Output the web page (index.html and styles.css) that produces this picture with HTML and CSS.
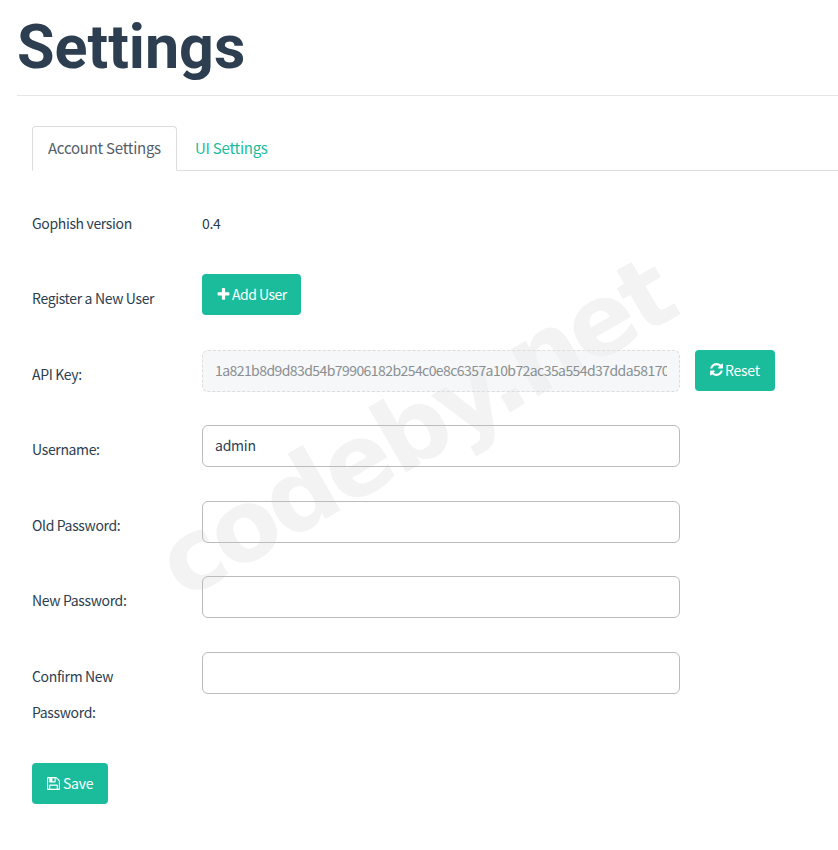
FILE: index.html
```html
<!DOCTYPE html>
<html lang="en">
<head>
    <meta charset="UTF-8">
    <title>Settings - Gophish</title>
    <link rel="stylesheet" href="styles.css">
</head>
<body>
    <div class="main">
        <h1 class="page-header">Settings</h1>
        <div class="tab-wrap">
            <ul class="nav-tabs">
                <li class="tab active">Account Settings</li>
                <li class="tab">UI Settings</li>
            </ul>
            <form class="settings-form">
                <div class="row row-version">
                    <div class="label">Gophish version</div>
                    <div class="value">0.4</div>
                </div>
                <div class="row">
                    <div class="label">Register a New User</div>
                    <button type="button" class="btn btn-add">
                        <svg class="icon" viewBox="0 0 1792 1792"><path d="M1600 736v192q0 40-28 68t-68 28h-416v416q0 40-28 68t-68 28h-192q-40 0-68-28t-28-68v-416h-416q-40 0-68-28t-28-68v-192q0-40 28-68t68-28h416v-416q0-40 28-68t68-28h192q40 0 68 28t28 68v416h416q40 0 68 28t28 68z"/></svg>
                        Add User
                    </button>
                </div>
                <div class="row">
                    <div class="label">API Key:</div>
                    <input class="input" type="text" value="1a821b8d9d83d54b79906182b254c0e8c6357a10b72ac35a554d37dda581706a" disabled>
                    <button type="button" class="btn btn-reset">
                        <svg class="icon" viewBox="0 0 1792 1792"><path d="M1639 1056q0 5-1 7-64 268-268 434.500t-478 166.500q-146 0-282.500-55t-243.500-157l-129 129q-19 19-45 19t-45-19-19-45v-448q0-26 19-45t45-19h448q26 0 45 19t19 45-19 45l-137 137q71 66 161 102t187 36q134 0 250-65t186-179q11-17 53-117 8-23 30-23h192q13 0 22.500 9.500t9.500 22.500zm25-800v448q0 26-19 45t-45 19h-448q-26 0-45-19t-19-45 19-45l138-138q-148-137-349-137-134 0-250 65t-186 179q-11 17-53 117-8 23-30 23h-199q-13 0-22.500-9.500t-9.500-22.500v-7q65-268 270-434.500t480-166.500q146 0 284 55.500t245 156.500l130-129q19-19 45-19t45 19 19 45z"/></svg>
                        Reset
                    </button>
                </div>
                <div class="row">
                    <div class="label">Username:</div>
                    <input class="input" type="text" value="admin">
                </div>
                <div class="row">
                    <div class="label">Old Password:</div>
                    <input class="input" type="password">
                </div>
                <div class="row">
                    <div class="label">New Password:</div>
                    <input class="input" type="password">
                </div>
                <div class="row">
                    <div class="label">Confirm New Password:</div>
                    <input class="input" type="password">
                </div>
                <button type="button" class="btn btn-save">
                    <svg class="icon" viewBox="0 0 1792 1792"><path d="M512 1536h768v-384h-768v384zm896 0h128v-896q0-14-10-38.500t-20-34.500l-281-281q-10-10-34-20t-39-10v416q0 40-28 68t-68 28h-576q-40 0-68-28t-28-68v-416h-128v1280h128v-416q0-40 28-68t68-28h832q40 0 68 28t28 68v416zm-384-928v-320q0-13-9.500-22.500t-22.500-9.500h-192q-13 0-22.500 9.500t-9.500 22.500v320q0 13 9.500 22.500t22.500 9.500h192q13 0 22.500-9.500t9.500-22.500zm640 32v928q0 40-28 68t-68 28h-1344q-40 0-68-28t-28-68v-1344q0-40 28-68t68-28h928q40 0 88 20t76 48l280 280q28 28 48 76t20 88z"/></svg>
                    Save
                </button>
            </form>
        </div>
        <div class="watermark">codeby.net</div>
    </div>
</body>
</html>
```

FILE: styles.css
```css
html, body {
    margin: 0;
    padding: 0;
    background: #fff;
    overflow: hidden;
}
body {
    font-family: "Noto Sans CJK SC", "Noto Sans", sans-serif;
    font-size: 14px;
    letter-spacing: -0.35px;
    color: #2c3e50;
}
.main {
    position: relative;
    height: 850px;
    padding-left: 17px;
    overflow: hidden;
}
.page-header {
    margin: 0;
    height: 95px;
    border-bottom: 1px solid #e5e5e5;
    font-family: Roboto, sans-serif;
    font-size: 61px;
    font-weight: 700;
    line-height: 94px;
    letter-spacing: 0;
    color: #2c3e50;
}
.tab-wrap {
    padding: 30px 0 0 15px;
}
.nav-tabs {
    display: flex;
    margin: 0;
    padding: 0;
    height: 44px;
    list-style: none;
    border-bottom: 1px solid #ddd;
}
.tab {
    height: 44px;
    padding: 0 15px 0 18px;
    line-height: 43px;
    font-size: 15px;
    letter-spacing: -0.25px;
    color: #1abc9c;
}
.tab.active {
    box-sizing: border-box;
    width: 145px;
    height: 45px;
    padding: 0 0 0 15px;
    border: 1px solid #ddd;
    border-bottom-color: #fff;
    border-radius: 4px 4px 0 0;
    background: #fff;
    line-height: 41px;
    color: #555e68;
}
.settings-form {
    position: relative;
    z-index: 1;
    padding-top: 35px;
}
.row {
    display: flex;
    align-items: flex-start;
    margin-bottom: 33.5px;
}
.label {
    flex: none;
    box-sizing: border-box;
    width: 170px;
    padding-top: 6px;
    padding-right: 30px;
    line-height: 36px;
}
.row-version {
    height: 36px;
    margin-bottom: 32px;
}
.row-version .label {
    padding-top: 0;
    line-height: 34px;
}
.value {
    line-height: 34px;
}
.input {
    flex: none;
    box-sizing: border-box;
    width: 478px;
    height: 42px;
    padding: 0 12px 2px;
    border: 1px solid #bbb;
    border-radius: 6px;
    background: transparent;
    font-family: inherit;
    font-size: 14px;
    letter-spacing: -0.25px;
    color: #2c3e50;
    outline: none;
}
.input:disabled {
    border: 1px dashed #ddd;
    background: rgba(236, 240, 241, 0.5);
    letter-spacing: -0.57px;
    color: #8a8f92;
}
.btn {
    display: inline-flex;
    align-items: center;
    justify-content: center;
    box-sizing: border-box;
    height: 41px;
    padding: 0 14px 1px;
    border: 0;
    border-radius: 4px;
    background: #1abc9c;
    font-family: inherit;
    font-size: 14px;
    letter-spacing: -0.25px;
    color: #fff;
}
.btn-add {
    letter-spacing: -0.5px;
}
.btn-reset {
    margin-left: 15px;
    padding-right: 15px;
}
.btn-save {
    padding-right: 15px;
}
.btn-save .icon {
    margin-right: 2px;
}
.icon {
    width: 15px;
    height: 15px;
    margin-right: 1px;
    fill: #fff;
}
.watermark {
    position: absolute;
    left: 128px;
    top: 373px;
    font-family: "DejaVu Sans", sans-serif;
    font-size: 99px;
    font-weight: 700;
    line-height: 110px;
    letter-spacing: -4px;
    white-space: nowrap;
    color: #f3f3f3;
    transform: rotate(-30deg);
}
```
